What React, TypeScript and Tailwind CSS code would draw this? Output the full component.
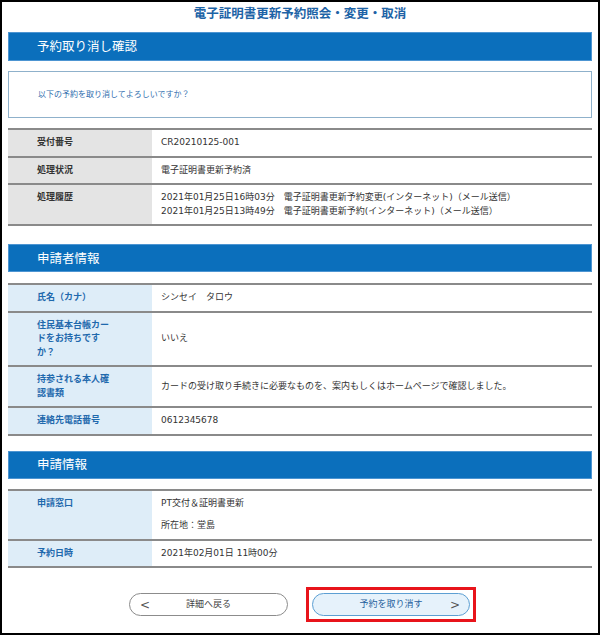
import React from "react";

type Row = { label: React.ReactNode; value: React.ReactNode };

const FONT = '"DejaVu Sans", "Noto Sans CJK JP", sans-serif';

function SectionBar({ title, className = "" }: { title: string; className?: string }) {
  return (
    <div
      className={`h-[28px] bg-[#0b6fbc] border border-[#4d95d2] flex items-center pl-[28px] text-white text-[12.5px] ${className}`}
      style={{ fontFamily: '"Noto Sans CJK JP", sans-serif' }}
    >
      {title}
    </div>
  );
}

function InfoTable({ rows, tone, className = "" }: { rows: Row[]; tone: "gray" | "blue"; className?: string }) {
  const labelCls =
    tone === "gray" ? "bg-[#e4e4e4] text-[#333333]" : "bg-[#deedf8] text-[#1f69ad]";
  return (
    <div className={`border-t-2 border-[#8a8a8a] ${className}`}>
      {rows.map((r, i) => (
        <div key={i} className="grid grid-cols-[144px_1fr] border-b-2 border-[#8a8a8a]">
          <div className={`${labelCls} pl-[29px] pr-[38px] py-[6px] font-bold text-[9px] leading-[13.5px]`}>
            {r.label}
          </div>
          <div className="pl-[9px] py-[6px] flex flex-col justify-center text-[9px] leading-[13.5px] text-[#333333]">
            {r.value}
          </div>
        </div>
      ))}
    </div>
  );
}

export default function App() {
  return (
    <div
      className="w-[600px] h-[635px] border-2 border-black bg-white px-[6px] box-border"
      style={{ fontFamily: FONT }}
    >
      <div
        className="h-[30px] pt-[2px] text-center text-[12.5px] leading-[18px] font-bold text-[#1d63a6]"
        style={{ fontFamily: '"Noto Sans CJK JP", sans-serif' }}
      >
        電子証明書更新予約照会・変更・取消
      </div>

      <SectionBar title="予約取り消し確認" className="h-[29px]" />

      <div className="mt-[10px] h-[47px] border border-[#8fb1cb] flex items-center pl-[29px] text-[8px] text-[#2f6eae]">
        以下の予約を取り消してよろしいですか？
      </div>

      <InfoTable
        className="mt-[10px]"
        tone="gray"
        rows={[
          { label: "受付番号", value: "CR20210125-001" },
          { label: "処理状況", value: "電子証明書更新予約済" },
          {
            label: "処理履歴",
            value: (
              <>
                <div>2021年01月25日16時03分　電子証明書更新予約変更(インターネット)（メール送信）</div>
                <div>2021年01月25日13時49分　電子証明書更新予約(インターネット)（メール送信）</div>
              </>
            ),
          },
        ]}
      />

      <SectionBar title="申請者情報" className="mt-[18px]" />

      <InfoTable
        className="mt-[11px]"
        tone="blue"
        rows={[
          { label: "氏名（カナ）", value: "シンセイ　タロウ" },
          { label: "住民基本台帳カードをお持ちですか？", value: "いいえ" },
          {
            label: "持参される本人確認書類",
            value: "カードの受け取り手続きに必要なものを、案内もしくはホームページで確認しました。",
          },
          { label: "連絡先電話番号", value: "0612345678" },
        ]}
      />

      <SectionBar title="申請情報" className="mt-[15px]" />

      <InfoTable
        className="mt-[10px]"
        tone="blue"
        rows={[
          {
            label: "申請窓口",
            value: (
              <div className="flex flex-col gap-[9px]">
                <div>PT交付＆証明書更新</div>
                <div>所在地：堂島</div>
              </div>
            ),
          },
          { label: "予約日時", value: "2021年02月01日 11時00分" },
        ]}
      />

      <div className="mt-[19px] flex items-center justify-center gap-[18px] pl-[5px]">
        <button className="w-[159px] h-[23px] rounded-full border border-[#8c8c8c] bg-white grid grid-cols-[24px_1fr_24px] items-center text-[9px] text-[#444444]">
          <span className="text-[12px] text-[#555555] pl-[10px] text-left leading-none">&lt;</span>
          <span className="text-center">詳細へ戻る</span>
          <span />
        </button>
        <div className="border-[3px] border-[#e8141b] p-[3px]">
          <button className="w-[158px] h-[23px] rounded-full border border-[#5c9fd3] bg-[#e6f2fb] grid grid-cols-[24px_1fr_24px] items-center text-[9px] text-[#1f5f9c]">
            <span />
            <span className="text-center">予約を取り消す</span>
            <span className="text-[12px] text-[#555555] pr-[9px] text-right leading-none">&gt;</span>
          </button>
        </div>
      </div>
    </div>
  );
}
